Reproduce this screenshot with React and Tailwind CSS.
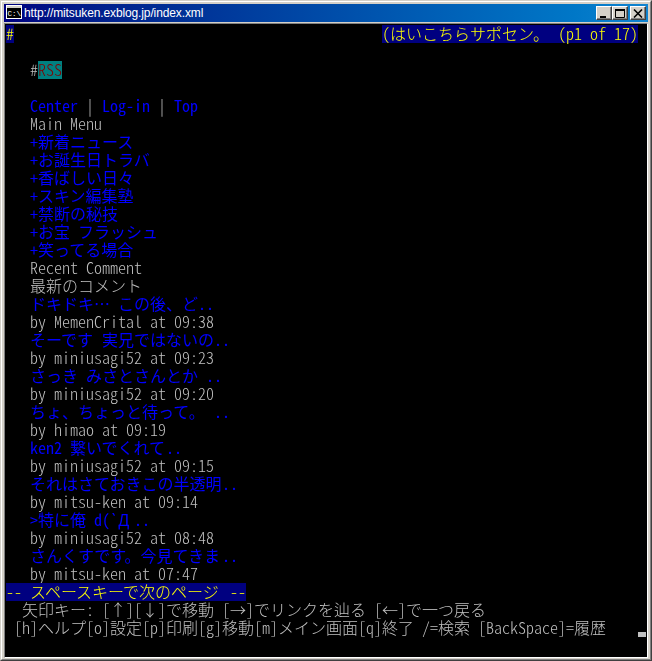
import React from "react";

const FONT = "font-['Noto_Sans_CJK_JP',sans-serif] text-[16px]";

// console grid: ascii = 8px cell, everything else = 16px cell
const Txt = ({ children }) => {
  const runs = children.match(/[\x00-\x7f]+|[^\x00-\x7f]+/g) || [];
  return runs.map((run, i) => {
    const ascii = run.charCodeAt(0) < 128;
    return (
      <span
        key={i}
        className={`inline-block h-[18px] align-top leading-[16px] whitespace-pre ${FONT} ${
          ascii ? "[font-feature-settings:'hwid']" : "[font-feature-settings:'fwid']"
        }`}
        style={{ width: run.length * (ascii ? 8 : 16) }}
      >
        {run}
      </span>
    );
  });
};

const Row = ({ color = "text-[#c0c0c0] font-light", children }) => (
  <div className={`h-[18px] leading-[18px] whitespace-pre ${color}`}>
    {typeof children === "string" ? <Txt>{children}</Txt> : children}
  </div>
);

const Link = ({ children }) => <Row color="text-[#0000ff] font-normal">{children}</Row>;

const Status = ({ children }) => (
  <span className="inline-block h-[18px] bg-[#000080] align-top text-[#ffff00]">
    <Txt>{children}</Txt>
  </span>
);

const menu = [
  "   +新着ニュース",
  "   +お誕生日トラバ",
  "   +香ばしい日々",
  "   +スキン編集塾",
  "   +禁断の秘技",
  "   +お宝 フラッシュ",
  "   +笑ってる場合",
];

const comments = [
  ["   ドキドキ… この後、ど..", "   by MemenCrital at 09:38"],
  ["   そーです 実兄ではないの..", "   by miniusagi52 at 09:23"],
  ["   さっき みさとさんとか ..", "   by miniusagi52 at 09:20"],
  ["   ちょ、ちょっと待って。 ..", "   by himao at 09:19"],
  ["   ken2 繋いでくれて..", "   by miniusagi52 at 09:15"],
  ["   それはさておきこの半透明..", "   by mitsu-ken at 09:14"],
  ["   >特に俺 d(`Д..", "   by miniusagi52 at 08:48"],
  ["   さんくすです。今見てきま..", "   by mitsu-ken at 07:47"],
];

const TitleButton = ({ children }) => (
  <button className="flex h-[14px] w-4 items-center justify-center border border-t-white border-l-white border-r-[#404040] border-b-[#404040] bg-[#d4d0c8] shadow-[inset_-1px_-1px_0_#808080]">
    {children}
  </button>
);

export default function App() {
  return (
    <div className="flex h-[661px] w-[652px] flex-col border border-t-[#d4d0c8] border-l-[#d4d0c8] border-r-[#404040] border-b-[#404040] bg-[#d4d0c8]">
      <div className="flex flex-1 flex-col border border-t-white border-l-white border-r-[#808080] border-b-[#808080] p-[2px] pb-[1px]">
        <div className="flex h-[18px] items-center bg-linear-to-r from-[#000080] to-[#1084d0] pl-[2px] pr-[2px]">
          <svg width="16" height="14" viewBox="0 0 16 14" className="mb-[3px] shrink-0">
            <rect x="0" y="0" width="16" height="14" fill="#c0c0c0" />
            <rect x="0.5" y="0.5" width="15" height="13" fill="#000" stroke="#fff" />
            <rect x="1" y="1" width="14" height="2" fill="#d4d0c8" />
            <text x="1.5" y="11" fill="#fff" fontSize="7.5" fontFamily="Liberation Mono">C:\</text>
          </svg>
          <span className="ml-[2px] font-['Liberation_Sans',sans-serif] text-[12px] leading-[18px] tracking-[-0.12px] text-white">
            http://mitsuken.exblog.jp/index.xml
          </span>
          <div className="ml-auto flex items-center">
            <TitleButton>
              <svg width="10" height="9" viewBox="0 0 10 9">
                <rect x="1" y="7" width="6" height="2" fill="#000" />
              </svg>
            </TitleButton>
            <TitleButton>
              <svg width="10" height="9" viewBox="0 0 10 9">
                <path d="M0.5 1.5h9v7h-9z" fill="none" stroke="#000" />
                <rect x="0" y="0" width="10" height="2" fill="#000" />
              </svg>
            </TitleButton>
            <div className="ml-[2px]">
              <TitleButton>
                <svg width="10" height="9" viewBox="0 0 10 9">
                  <path d="M1 0.5l8 8M9 0.5l-8 8" stroke="#000" strokeWidth="1.6" />
                </svg>
              </TitleButton>
            </div>
          </div>
        </div>

        <div className="mt-[1px] flex-1 border border-t-[#808080] border-l-[#808080] border-r-white border-b-white bg-black px-[1px] pt-[1px]">
          <div className="will-change-transform">
            <Row>
              <div className="flex justify-between pr-2">
                <Status>#</Status>
                <Status>(はいこちらサポセン。 (p1 of 17)</Status>
              </div>
            </Row>
            <Row> </Row>
            <Row>
              <Txt>{"   #"}</Txt>
              <span className="inline-block h-[18px] bg-[#008080] align-top text-[#800000]">
                <Txt>RSS</Txt>
              </span>
            </Row>
            <Row> </Row>
            <Row>
              <span className="font-normal text-[#0000ff]"><Txt>{"   Center"}</Txt></span>
              <Txt>{" | "}</Txt>
              <span className="font-normal text-[#0000ff]"><Txt>Log-in</Txt></span>
              <Txt>{" | "}</Txt>
              <span className="font-normal text-[#0000ff]"><Txt>Top</Txt></span>
            </Row>
            <Row>{"   Main Menu"}</Row>
            {menu.map((m) => (
              <Link key={m}>{m}</Link>
            ))}
            <Row>{"   Recent Comment"}</Row>
            <Row>{"   最新のコメント"}</Row>
            {comments.map(([title, by]) => (
              <React.Fragment key={by + title}>
                <Link>{title}</Link>
                <Row>{by}</Row>
              </React.Fragment>
            ))}
            <Row>
              <Status>-- スペースキーで次のページ --</Status>
            </Row>
            <Row>{"  矢印キー: [↑][↓]で移動 [→]でリンクを辿る [←]で一つ戻る"}</Row>
            <Row>
              <div className="flex items-end justify-between">
                <span><Txt>{" [h]ヘルプ[o]設定[p]印刷[g]移動[m]メイン画面[q]終了 /=検索 [BackSpace]=履歴"}</Txt></span>
                <span className="h-[5px] w-2 bg-[#c0c0c0]" />
              </div>
            </Row>
          </div>
        </div>
      </div>
    </div>
  );
}
